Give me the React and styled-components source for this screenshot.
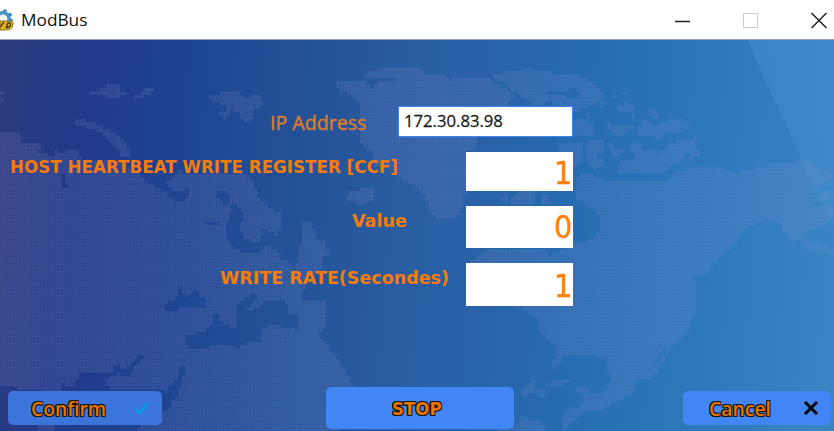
import React, { useLayoutEffect, useRef, useState } from 'react';
import styled, { createGlobalStyle, css } from 'styled-components';

const GlobalStyle = createGlobalStyle`
  html, body { margin: 0; padding: 0; overflow: hidden; background: #fff; }
  * { box-sizing: border-box; }
`;

/* ---------- dotted world map ---------- */

const PITCH = 3.43;
const WIDTH = 834;
const TOP = 40;
const HEIGHT = 391;

const LAND = [
  '0,131 12,131 21,135 21,143 40,142 41,149 35,152 44,154 54,156 57,148 62,154 66,148 78,150 79,158 100,160 125,164 145,178 155,182 165,188 170,196 180,200 190,190 172,190 165,182 175,176 180,172 245,174 255,185 258,197 270,207 281,213 283,225 276,232 280,256 293,266 300,262 297,250 303,245 302,223 311,223 316,230 318,243 325,240 330,255 322,258 323,270 310,275 302,292 303,299 327,299 327,325 318,332 320,338 327,346 340,363 352,383 352,400 340,431 133,431 163,412 163,389 110,389 40,431 40,389 18,389 18,385 0,385',
  '38,425 54,425 54,431 38,431',
  '88,94 98,91 98,90 108,88 108,86 121,86 121,90 127,92 130,95 118,95 120,99 108,99 106,95 88,95',
  '134,97 140,93 140,90 155,89 155,92 147,94 142,99 134,99',
  '207,96 218,95 218,92 241,92 243,98 253,96 259,96 263,101 263,106 254,108 254,119 247,122 240,120 238,112 230,108 230,115 225,119 219,115 226,110 227,106 213,101',
  '76,120 85,120 97,124 110,130 120,138 130,150 130,157 121,156 115,145 100,133 86,127 76,125',
  '0,93 3,93 3,96 0,96', '0,99 3,99 3,102 0,102',
  '337,82 368,82 370,89 376,84 380,81 393,82 393,78 363,78 363,73 380,70 388,66 397,66 399,69 423,69 424,73 447,73 448,82 458,76 462,79 490,79 497,85 508,90 515,97 508,102 505,115 490,135 477,138 477,147 467,150 465,192 463,200 460,213 452,220 433,216 425,197 418,187 400,178 392,167 373,167 372,150 363,145 360,137 360,103 350,95 338,88',
  '347,193 360,189 369,186 375,191 372,200 363,205 348,200', '321,207 324,207 324,213 321,213',
  '493,77 505,72 523,69 530,69 555,73 577,75 588,80 598,87 605,95 600,102 585,108 573,112 560,110 550,102 537,106 527,100 513,90 503,83',
  '573,120 579,118 590,122 595,126 595,135 573,136',
  '586,113 589,113 589,119 586,119', '602,101 608,100 607,106 601,108', '612,96 617,96 617,99 612,99', '621,90 627,90 627,94 621,94',
  '608,123 616,126 633,125 633,129 624,132 624,136 616,135 608,130',
  '618,107 625,103 634,104 635,118 631,118 630,112 618,112',
  '637,130 643,120 650,121 653,125 668,122 668,117 682,118 684,122 691,125 690,130 676,132 665,132 665,136 637,137',
  '647,107 656,107 656,112 659,118 652,117 647,112', '655,137 662,136 661,140 655,140',
  '586,141 604,141 604,150 596,157 605,160 605,165 595,170 588,165',
  '608,142 614,142 614,148 625,149 622,156 610,155',
  '630,144 640,144 640,150 660,152 668,144 682,139 697,137 696,146 700,155 690,160 690,153 675,164 665,172 640,175 617,172 617,163 625,160 635,158',
  '560,144 582,144 585,160 575,166 560,168',
  '500,197 507,195 510,201 500,202', '510,198 520,192 535,191 537,202 528,206 510,206', '541,195 548,195 551,203 541,205',
  '577,178 585,172 595,176 610,181 640,181 665,181 675,172 690,167 720,167 735,175 745,171 765,166 785,162 795,162 799,158 805,161 813,163 828,173 834,175 830,180 820,184 812,194 818,198 825,190 834,194 834,200 812,201 815,206 834,205 834,218 823,225 806,232 803,235 812,242 834,249 834,256 807,248 800,238 792,243 783,231 780,224 767,219 752,224 742,231 735,242 723,254 708,272 697,279 697,295 695,313 687,333 670,349 663,363 655,376 648,379 637,378 636,386 632,394 607,408 580,413 570,426 566,431 562,431 565,410 580,405 585,398 575,389 585,385 593,393 603,394 610,379 607,359 580,354 565,355 555,370 552,366 557,349 540,333 538,319 520,308 466,285 470,262 490,249 530,250 545,250 550,256 575,243 592,239 602,228 600,216 590,208 577,200',
  '520,393 533,379 537,382 535,388 547,389 547,398 540,398 534,392 526,397', '545,385 555,379 568,379 568,384 556,386', '565,412 575,405 582,407 578,416 565,420', '497,428 515,424 525,417 530,422 542,422 548,431 497,431',
];

const WATER = [
  '63,383 66,383 68,388 75,388 77,379 83,371 113,371 115,364 120,369 128,367 134,360 142,354 143,359 135,368 128,377 118,374 106,381 110,389 110,395 63,395',
  '187,361 185,373 177,396 167,409 163,412 163,399 170,386 177,378 182,366',
  '165,303 174,299 178,296 178,286 181,286 185,296 192,295 192,289 200,289 200,296 207,301 207,309 192,309 190,307 178,307 175,312 165,309',
  '184,333 193,335 200,331 210,329 213,316 218,313 222,324 235,328 235,306 248,297 257,292 257,299 247,308 252,312 267,299 283,299 287,305 287,313 297,316 300,331 285,328 275,324 262,328 262,341 247,343 238,349 228,344 215,344 207,349 190,349 185,341',
  '233,207 241,208 243,219 238,224 244,239 258,243 263,236 262,228 270,232 282,237 280,249 273,249 263,244 262,252 250,253 233,249 227,236 227,223',
  '206,223 218,223 218,226 206,226', '217,192 227,192 230,203 240,208 238,214 229,207 218,199',
  '60,174 64,174 65,184 70,187 62,187', '144,176 152,180 157,184 165,188 181,192 190,186 188,198 180,201 170,198 166,191 157,186 147,184',
  '570,88 576,88 576,91 570,91', '545,93 578,93 578,97 550,96',
  '695,277 697,272 698,279 689,280', '667,349 662,357 657,363 655,360 662,350',
];

const parse = (s) => s.split(' ').map((p) => p.split(',').map(Number));

function inside(x, y, poly) {
  let hit = false;
  for (let i = 0, j = poly.length - 1; i < poly.length; j = i++) {
    const [xi, yi] = poly[i];
    const [xj, yj] = poly[j];
    if (yi > y !== yj > y && x < ((xj - xi) * (y - yi)) / (yj - yi) + xi) hit = !hit;
  }
  return hit;
}

/* Snaps the coast lines to the dot grid and joins each row's cells into runs. */
function buildMapPath() {
  const land = LAND.map(parse);
  const water = WATER.map(parse);
  const cols = Math.ceil(WIDTH / PITCH);
  const rows = Math.ceil(HEIGHT / PITCH);
  let d = '';
  for (let r = 0; r < rows; r++) {
    let start = -1;
    for (let c = 0; c <= cols; c++) {
      const x = (c + 0.5) * PITCH;
      const y = TOP + (r + 0.5) * PITCH;
      const on = c < cols && land.some((p) => inside(x, y, p)) && !water.some((p) => inside(x, y, p));
      if (on && start < 0) start = c;
      if (!on && start >= 0) {
        d += `M${(start * PITCH).toFixed(2)} ${(r * PITCH).toFixed(2)}h${((c - start) * PITCH).toFixed(2)}v${PITCH}H${(start * PITCH).toFixed(2)}z`;
        start = -1;
      }
    }
  }
  return d;
}

const MAP_PATH = buildMapPath();

const Backdrop = styled.svg`
  position: absolute;
  inset: 0;
  width: 834px;
  height: 391px;
  z-index: -1;
`;

function WorldMap() {
  return (
    <Backdrop viewBox="0 0 834 391" aria-hidden="true">
      <defs>
        <linearGradient id="sea" gradientUnits="userSpaceOnUse" x1="0" y1="120" x2="834" y2="190">
          <stop offset="0" stopColor="#2c3b80" />
          <stop offset="0.08" stopColor="#223988" />
          <stop offset="0.2" stopColor="#1e4390" />
          <stop offset="0.33" stopColor="#224f96" />
          <stop offset="0.5" stopColor="#2a5ea3" />
          <stop offset="0.58" stopColor="#2962a7" />
          <stop offset="0.68" stopColor="#266bb0" />
          <stop offset="0.85" stopColor="#2d78bb" />
          <stop offset="1" stopColor="#3a84c4" />
        </linearGradient>
        <linearGradient id="beam" x1="0" y1="0" x2="1" y2="1">
          <stop offset="0" stopColor="#5aa5dc" stopOpacity="0.24" />
          <stop offset="1" stopColor="#5aa5dc" stopOpacity="0.12" />
        </linearGradient>
        <pattern id="dots" width={PITCH} height={PITCH} patternUnits="userSpaceOnUse">
          <rect width={PITCH} height={PITCH} fill="#8d8ecc" fillOpacity="0.1" />
          <rect x="0.5" y="0.5" width="2.4" height="2.4" fill="#a0a8d8" fillOpacity="0.11" />
        </pattern>
      </defs>
      <rect width="834" height="391" fill="url(#sea)" />
      <path d="M747 0L790 93L813 150L834 186V0z" fill="url(#beam)" />
      <path d={MAP_PATH} fill="url(#dots)" />
    </Backdrop>
  );
}

/* ---------- text held to a given width ---------- */

const FitBox = styled.span`
  display: inline-block;
  flex: none;
  width: ${(p) => p.$w}px;
  white-space: nowrap;
`;
const FitInner = styled.span`
  display: inline-block;
  transform-origin: 0 50%;
`;

function Fit({ w, children }) {
  const ref = useRef(null);
  const [scale, setScale] = useState(1);
  useLayoutEffect(() => {
    setScale(w / ref.current.offsetWidth);
  }, [w, children]);
  return (
    <FitBox $w={w}>
      <FitInner ref={ref} style={{ transform: `scaleX(${scale})` }}>{children}</FitInner>
    </FitBox>
  );
}

/* ---------- window ---------- */

const Window = styled.div`
  width: 834px;
  height: 431px;
  display: flex;
  flex-direction: column;
  overflow: hidden;
`;
const TitleBar = styled.header`
  height: 40px;
  flex: none;
  display: flex;
  align-items: center;
  background: #fff;
  border-bottom: 1px solid #929eb8;
`;
const AppIcon = styled.svg`
  width: 14px;
  height: 22px;
  margin-right: 7px;
`;
const Title = styled.h1`
  margin: 0 auto 0 0;
  font: 400 17px/22px 'Open Sans', 'Noto Sans', sans-serif;
  color: #111;
`;
const Controls = styled.svg`
  width: 170px;
  height: 38px;
`;
const Client = styled.main`
  position: relative;
  z-index: 0;
  flex: 1;
  display: flex;
  flex-direction: column;
  justify-content: space-between;
  padding-bottom: 2px;
`;
const Form = styled.form`
  display: flex;
  flex-direction: column;
  padding: 66px 261px 0 0;
`;
const Row = styled.div`
  display: flex;
  justify-content: flex-end;
  height: ${(p) => p.$h}px;
  margin-bottom: 15px;
`;
const Label = styled.label`
  color: #f57c0a;
  margin-right: ${(p) => p.$gap}px;
  padding-top: ${(p) => p.$top}px;
  font: 700 18.5px/20px 'DejaVu Sans', Verdana, sans-serif;
  ${(p) => p.$light && css`
    font: 500 20px/22px 'Open Sans', 'Trebuchet MS', sans-serif;
    color: #e47c22;
    -webkit-text-stroke: 0.35px #e47c22;
  `}
`;
const AddressBox = styled.div`
  width: 175px;
  height: 31px;
  padding: 2px 0 0 5px;
  background: #fff;
  border: 1px solid #4285f4;
  color: #1c1c1c;
  font: 500 17px/24px 'Open Sans', 'Trebuchet MS', sans-serif;
  -webkit-text-stroke: 0.3px #1c1c1c;
`;
const NumberBox = styled.div`
  width: 107px;
  height: 100%;
  padding: ${(p) => p.$top}px 1px 0 0;
  display: flex;
  justify-content: flex-end;
  background: #fff;
  color: #ff8000;
  font: 400 32px/36px 'DejaVu Sans', Verdana, sans-serif;
  -webkit-text-stroke: 0.3px #ff8000;
`;
const Footer = styled.footer`
  display: grid;
  grid-template-columns: 318px 357px 148px;
  align-items: center;
  padding-left: 8px;
`;
const Button = styled.button`
  display: flex;
  align-items: center;
  width: ${(p) => p.$w}px;
  height: ${(p) => p.$h || 34}px;
  padding: 1px 0 0 ${(p) => p.$pad}px;
  border: 0;
  border-radius: 5px;
  background: ${(p) => (p.$muted ? '#3b75d9' : '#4285f4')};
  color: #ea7400;
  font: 600 20px/24px 'Open Sans', 'Trebuchet MS', sans-serif;
  text-shadow: -1px -1px #14140c, 1px -1px #14140c, -1px 1px #14140c, 1px 1px #14140c, 0 1px #14140c, -1px 0 #14140c;
  ${(p) => p.$wide && css`font: 700 18px/22px 'DejaVu Sans', Verdana, sans-serif;`}
`;
const Glyph = styled.svg`
  width: 16px;
  height: 16px;
  margin: -1px 0 0 ${(p) => p.$gap}px;
`;

export default function App() {
  return (
    <>
      <GlobalStyle />
      <Window>
        <TitleBar>
          <AppIcon viewBox="0 0 14 22">
            <circle cx="3" cy="10" r="6.2" fill="none" stroke="#4b93c8" strokeWidth="3.6" />
            <circle cx="3" cy="10" r="8.6" fill="none" stroke="#3c86bd" strokeWidth="2.4" strokeDasharray="3.4 3.35" />
            <circle cx="3" cy="10" r="4" fill="#eef6fb" />
            <path d="M0 12H10Q14 12 13 16Q12 21 7 21H0z" fill="#e3b21c" stroke="#7a6220" strokeWidth="0.8" />
            <path d="M0 18L4 13M6 19L8 14H9.5Q11 14 10.5 16Q10 18.5 6 18.7" fill="none" stroke="#4b3d16" strokeWidth="1.4" />
          </AppIcon>
          <Title><Fit w={66}>ModBus</Fit></Title>
          <Controls viewBox="0 0 170 38" fill="none">
            <path d="M11 20.5H26" stroke="#222" strokeWidth="1.5" />
            <rect x="79.5" y="12.5" width="14" height="14" stroke="#ccc" />
            <path d="M147.5 12L162.5 27M162.5 12L147.5 27" stroke="#222" strokeWidth="1.5" />
          </Controls>
        </TitleBar>
        <Client>
          <WorldMap />
          <Form>
            <Row $h={31}>
              <Label $light $gap={32} $top={6}><Fit w={96}>IP Address</Fit></Label>
              <AddressBox><Fit w={99}>172.30.83.98</Fit></AddressBox>
            </Row>
            <Row $h={39}>
              <Label $gap={68} $top={5}><Fit w={388}>HOST HEARTBEAT WRITE REGISTER [CCF]</Fit></Label>
              <NumberBox $top={3}><Fit w={18}>1</Fit></NumberBox>
            </Row>
            <Row $h={42}>
              <Label $gap={59} $top={5}><Fit w={55}>Value</Fit></Label>
              <NumberBox $top={3}><Fit w={18}>0</Fit></NumberBox>
            </Row>
            <Row $h={43}>
              <Label $gap={17} $top={5}><Fit w={229}>WRITE RATE(Secondes)</Fit></Label>
              <NumberBox $top={5}><Fit w={18}>1</Fit></NumberBox>
            </Row>
          </Form>
          <Footer>
            <Button type="button" $w={154} $pad={23} $muted>
              <Fit w={75}>Confirm</Fit>
              <Glyph $gap={28} viewBox="0 0 16 16">
                <path d="M2 9L6 13L14 2.5" fill="none" stroke="#079ce3" strokeWidth="2.8" />
              </Glyph>
            </Button>
            <Button type="button" $w={188} $h={42} $pad={66} $wide>
              <Fit w={50}>STOP</Fit>
            </Button>
            <Button type="button" $w={148} $pad={26}>
              <Fit w={62}>Cancel</Fit>
              <Glyph $gap={32} viewBox="0 0 16 16">
                <path d="M2 2L14 14M14 2L2 14" fill="none" stroke="#050505" strokeWidth="3" />
              </Glyph>
            </Button>
          </Footer>
        </Client>
      </Window>
    </>
  );
}
